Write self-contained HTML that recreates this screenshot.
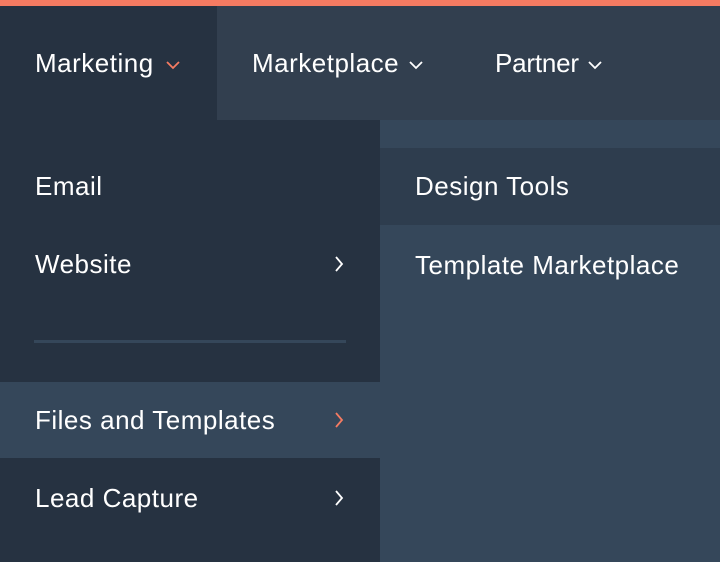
<!DOCTYPE html><html><head><style>
body{margin:0;width:720px;height:562px;overflow:hidden;background:#263241;font-family:"Liberation Sans",sans-serif;color:#fff;position:relative}
div{position:absolute}
.t{font-size:26px;line-height:28px;white-space:nowrap;letter-spacing:0.5px}
</style></head><body>
<div style="left:0;top:0;width:720px;height:6px;background:#f57b62"></div>
<div style="left:217px;top:6px;width:503px;height:114px;background:#323f4f"></div>
<div style="left:380px;top:120px;width:340px;height:442px;background:#35475a"></div>
<div style="left:380px;top:148px;width:340px;height:77px;background:#2e3d4e"></div>
<div style="left:0;top:382px;width:380px;height:76px;background:#35475a"></div>
<div style="left:34px;top:340px;width:312px;height:3px;background:#35475a"></div>
<div class="t" style="left:35px;top:49px">Marketing</div>
<div class="t" style="left:252px;top:49px">Marketplace</div>
<div class="t" style="left:495px;top:49px;letter-spacing:-0.2px">Partner</div>
<svg style="position:absolute;left:166px;top:61px" width="14" height="9"><path d="M1 1L7 7L13 1" stroke="#f57b62" stroke-width="1.8" fill="none"/></svg>
<svg style="position:absolute;left:409px;top:61px" width="14" height="9"><path d="M1 1L7 7L13 1" stroke="#fff" stroke-width="1.8" fill="none"/></svg>
<svg style="position:absolute;left:588px;top:61px" width="14" height="9"><path d="M1 1L7 7L13 1" stroke="#fff" stroke-width="1.8" fill="none"/></svg>
<div class="t" style="left:35px;top:172px">Email</div>
<div class="t" style="left:35px;top:250px">Website</div>
<div class="t" style="left:35px;top:406px">Files and Templates</div>
<div class="t" style="left:35px;top:484px">Lead Capture</div>
<div class="t" style="left:415px;top:172px">Design Tools</div>
<div class="t" style="left:415px;top:251px">Template Marketplace</div>
<svg style="position:absolute;left:335px;top:256px" width="9" height="16"><path d="M1 1L7 8L1 15" stroke="#fff" stroke-width="1.8" fill="none"/></svg>
<svg style="position:absolute;left:335px;top:412px" width="9" height="16"><path d="M1 1L7 8L1 15" stroke="#f57b62" stroke-width="1.8" fill="none"/></svg>
<svg style="position:absolute;left:335px;top:490px" width="9" height="16"><path d="M1 1L7 8L1 15" stroke="#fff" stroke-width="1.8" fill="none"/></svg>
</body></html>
